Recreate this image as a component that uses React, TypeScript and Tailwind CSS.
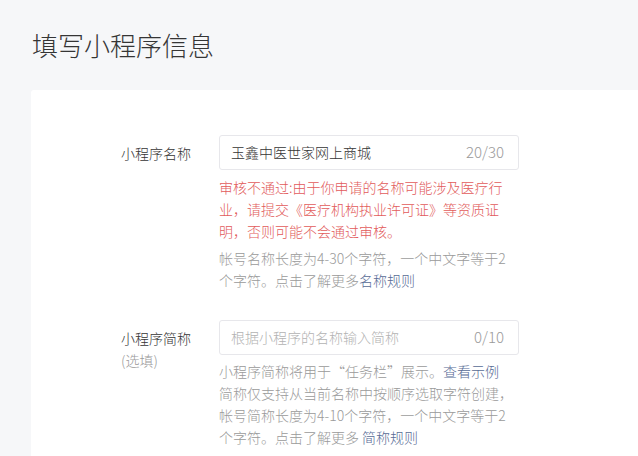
export default function App() {
  const font = { fontFamily: '"Noto Sans CJK SC", "Noto Sans", sans-serif' };
  return (
    <div className="w-[638px] h-[456px] overflow-hidden bg-[#f6f7f9] font-light" style={font}>
      <div className="pl-[32px] pt-[27px] h-[90px]">
        <h1 className="text-[26px] leading-[36px] text-[#353535] font-light">填写小程序信息</h1>
      </div>
      <div className="ml-[31px] bg-white rounded-tl-[3px] pl-[90px] pt-[45px] h-[400px]">
        <div className="flex">
          <div className="w-[98px] pt-[7px] text-[14px] leading-[22px] text-[#353535]">小程序名称</div>
          <div className="w-[300px]">
            <div className="h-[35px] border border-[#e7e7eb] rounded-[3px] flex items-center justify-between pl-[11px] pr-[14px] text-[14px]">
              <span className="text-[#353535]">玉鑫中医世家网上商城</span>
              <span className="text-[#9a9a9a] text-[15px]">20/30</span>
            </div>
            <p className="mt-[6px] w-[296px] text-[14px] leading-[22px] text-[#e25b5b]">
              审核不通过:由于你申请的名称可能涉及医疗行业，请提交《医疗机构执业许可证》等资质证明，否则可能不会通过审核。
            </p>
            <p className="mt-[5px] w-[296px] text-[14px] leading-[22px] text-[#9a9a9a]">
              帐号名称长度为4-30个字符，一个中文字等于2个字符。点击了解更多<span className="text-[#576b95]">名称规则</span>
            </p>
          </div>
        </div>
        <div className="flex mt-[29px]">
          <div className="w-[98px] pt-[7px] text-[14px] leading-[22px] text-[#353535]">
            <div>小程序简称</div>
            <div className="text-[#9a9a9a]">(选填)</div>
          </div>
          <div className="w-[300px]">
            <div className="h-[35px] border border-[#e7e7eb] rounded-[3px] flex items-center justify-between pl-[11px] pr-[14px] text-[14px]">
              <span className="text-[#b2b2b2]">根据小程序的名称输入简称</span>
              <span className="text-[#9a9a9a] text-[15px]">0/10</span>
            </div>
            <div className="mt-[5px] w-[296px] text-[14px] leading-[22px] text-[#9a9a9a]">
              <p>小程序简称将用于“任务栏”展示。<span className="text-[#576b95]">查看示例</span></p>
              <p>简称仅支持从当前名称中按顺序选取字符创建，帐号简称长度为4-10个字符，一个中文字等于2个字符。点击了解更多 <span className="text-[#576b95]">简称规则</span></p>
            </div>
          </div>
        </div>
      </div>
    </div>
  );
}
